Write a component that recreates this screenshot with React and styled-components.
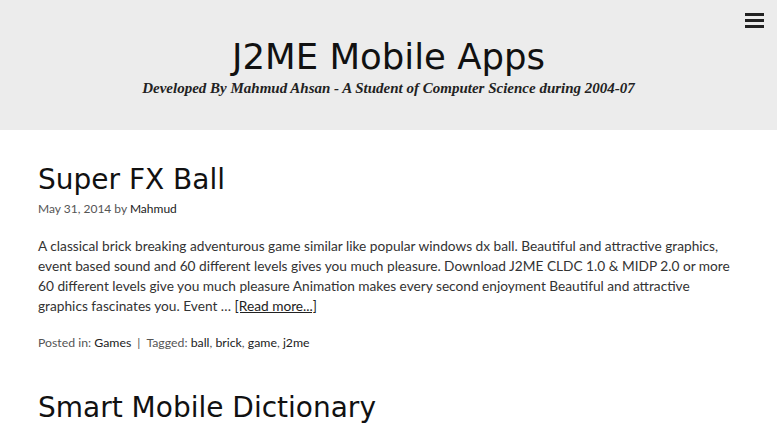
import React from "react";
import styled, { createGlobalStyle } from "styled-components";

const Global = createGlobalStyle`
  html, body { margin: 0; padding: 0; background: #fff; }
  body { font-family: "Lato", "DejaVu Sans", sans-serif; color: #333; }
`;

const Header = styled.header`
  position: relative;
  height: 130px;
  background: #ececec;
  display: flex;
  flex-direction: column;
  align-items: center;
  padding-top: 35px;
  box-sizing: border-box;
`;

const SiteTitle = styled.h1`
  margin: 0;
  font-family: "DejaVu Sans", sans-serif;
  font-weight: normal;
  font-size: 35.5px;
  line-height: 44px;
  color: #111;
`;

const Tagline = styled.p`
  margin: 0;
  font-family: "Liberation Serif", serif;
  font-style: italic;
  font-weight: bold;
  font-size: 15px;
  line-height: 18px;
  color: #222;
`;

const MenuButton = styled.button`
  position: absolute;
  top: 13px;
  right: 13px;
  width: 19px;
  padding: 0;
  border: 0;
  background: none;
  display: flex;
  flex-direction: column;
  gap: 3px;
`;

const Bar = styled.span`
  display: block;
  height: 3px;
  background: #222;
`;

const Main = styled.main`
  padding: 32px 37px 0 38px;
`;

const Article = styled.article`
  margin-bottom: 38px;
`;

const PostTitle = styled.h2`
  margin: 0;
  font-family: "DejaVu Sans", sans-serif;
  font-weight: normal;
  font-size: 28px;
  line-height: 36px;
  color: #111;
`;

const Meta = styled.div`
  font-size: 12px;
  line-height: 18px;
  color: #555;
  margin-top: 2px;
`;

const Strong = styled.span`
  color: #222;
`;

const Body = styled.p`
  margin: 18px 0 0;
  font-size: 13.7px;
  line-height: 20px;
  color: #333;
`;

const More = styled.a`
  color: #222;
  text-decoration: underline;
`;

const Footer = styled.div`
  margin-top: 18px;
  font-size: 12.3px;
  line-height: 18px;
  color: #555;
`;

const Sep = styled.span`
  margin: 0 6px;
`;

export default function App() {
  return (
    <>
      <Global />
      <Header>
        <SiteTitle>J2ME Mobile Apps</SiteTitle>
        <Tagline>Developed By Mahmud Ahsan - A Student of Computer Science during 2004-07</Tagline>
        <MenuButton aria-label="menu">
          <Bar />
          <Bar />
          <Bar />
        </MenuButton>
      </Header>
      <Main>
        <Article>
          <PostTitle>Super FX Ball</PostTitle>
          <Meta>
            May 31, 2014 by <Strong>Mahmud</Strong>
          </Meta>
          <Body>
            A classical brick breaking adventurous game similar like popular windows dx ball. Beautiful and attractive graphics, event based sound and 60 different levels gives you much pleasure. Download J2ME CLDC 1.0 &amp; MIDP 2.0 or more 60 different levels give you much pleasure Animation makes every second enjoyment Beautiful and attractive graphics fascinates you. Event … <More>[Read more...]</More>
          </Body>
          <Footer>
            Posted in: <Strong>Games</Strong><Sep>|</Sep>Tagged: <Strong>ball</Strong>, <Strong>brick</Strong>, <Strong>game</Strong>, <Strong>j2me</Strong>
          </Footer>
        </Article>
        <Article>
          <PostTitle>Smart Mobile Dictionary</PostTitle>
        </Article>
      </Main>
    </>
  );
}
